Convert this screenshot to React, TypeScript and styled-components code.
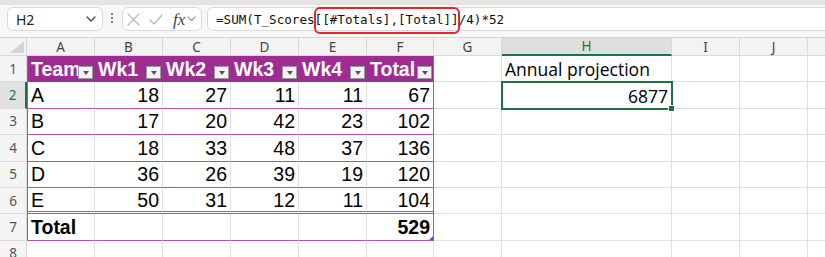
import React from 'react';
import styled, { createGlobalStyle, css } from 'styled-components';

const GlobalStyle = createGlobalStyle`
  html, body { margin: 0; padding: 0; background: #fff; overflow: hidden; }
  #root { width: 825px; height: 257px; }
`;

const PURPLE = '#a02b93';
const LINE = '#b84dae';
const GRID = '#e1e1e1';
const GREEN = '#1e7145';

const Page = styled.div`
  width: 825px;
  height: 257px;
  overflow: hidden;
  display: flex;
  flex-direction: column;
  background: #fff;
`;

const TopStrip = styled.div`
  flex: none;
  height: 5px;
  background: #e7e3e2;
`;

const Toolbar = styled.div`
  flex: none;
  height: 32px;
  box-sizing: border-box;
  padding: 2px 0 0 7px;
  background: #f7f7f7;
  display: flex;
  align-items: flex-start;
  overflow: hidden;
`;

const BoxBase = css`
  box-sizing: border-box;
  height: 24px;
  background: #fff;
  border: 1px solid #dadada;
  border-radius: 6px;
  display: flex;
  align-items: center;
`;

const NameBox = styled.div`
  ${BoxBase};
  width: 96px;
  padding: 0 6px 0 8px;
  justify-content: space-between;
  font-family: "Noto Sans", "Open Sans", sans-serif;
  font-size: 14px;
  color: #222;
`;

const Dots = styled.div`
  margin: 6px 0 0 8px;
  width: 2px;
  display: flex;
  flex-direction: column;
  gap: 2px;
  & > i {
    display: block;
    width: 2px;
    height: 2px;
    border-radius: 1px;
    background: #555;
  }
`;

const FuncBox = styled.div`
  ${BoxBase};
  width: 80px;
  margin-left: 9px;
  padding-left: 4px;
  gap: 9px;
`;

const Fx = styled.span`
  font-family: "Liberation Serif", "DejaVu Serif", serif;
  font-style: italic;
  font-size: 17px;
  color: #444;
  margin-left: 1px;
  margin-right: -7px;
  line-height: 1;
`;

const FormulaBox = styled.div`
  ${BoxBase};
  flex: 1;
  margin-left: 5px;
  margin-right: -12px;
  padding-left: 8px;
  font-family: "DejaVu Sans Mono", "Liberation Mono", monospace;
  font-size: 12.6px;
  color: #111;
  white-space: nowrap;
  overflow: visible;
`;

const Highlight = styled.span`
  position: relative;
  &::after {
    content: '';
    position: absolute;
    left: -1px;
    right: -1px;
    top: -5px;
    bottom: -7px;
    border: 2px solid #e3262b;
    border-radius: 6px;
    pointer-events: none;
  }
`;

const Sheet = styled.div`
  flex: none;
  display: grid;
  grid-template-columns: 27px 68px 68px 68px 68px 68px 67px 68px 170px 68px 68px 68px;
  grid-template-rows: 18px repeat(8, 26.4px);
  border-top: 1px solid #d6d6d6;
`;

const Corner = styled.div`
  box-sizing: border-box;
  background: #f3f3f3;
  border-right: 1px solid #d9d9d9;
  border-bottom: 1px solid #d9d9d9;
  display: flex;
  align-items: flex-end;
  justify-content: flex-end;
  padding: 0 2px 2px 0;
`;

const ColHead = styled.div<{ $selected?: boolean }>`
  box-sizing: border-box;
  display: flex;
  align-items: center;
  justify-content: center;
  font-family: "Noto Sans", "Open Sans", sans-serif;
  font-size: 13.5px;
  color: ${p => (p.$selected ? GREEN : '#444')};
  background: ${p => (p.$selected ? '#dedede' : '#f3f3f3')};
  border-right: 1px solid #d9d9d9;
  border-bottom: ${p => (p.$selected ? `2px solid ${GREEN}` : '1px solid #d9d9d9')};
`;

const RowHead = styled.div<{ $selected?: boolean }>`
  box-sizing: border-box;
  display: flex;
  align-items: center;
  justify-content: center;
  font-family: "Noto Sans", "Open Sans", sans-serif;
  font-size: 13.5px;
  color: ${p => (p.$selected ? GREEN : '#555')};
  background: ${p => (p.$selected ? '#e2e2e2' : '#f5f5f5')};
  border-bottom: 1px solid #dcdcdc;
  border-right: ${p => (p.$selected ? `2px solid ${GREEN}` : '1px solid #d9d9d9')};
`;

type Kind = 'plain' | 'head' | 'body' | 'total';

const Cell = styled.div<{
  $kind: Kind;
  $num?: boolean;
  $edgeL?: boolean;
  $edgeR?: boolean;
  $below?: 'grid' | 'table' | 'double' | 'head';
  $alt?: boolean;
  $selected?: boolean;
}>`
  box-sizing: border-box;
  position: relative;
  display: flex;
  align-items: center;
  justify-content: ${p => (p.$num ? 'flex-end' : 'flex-start')};
  padding: 1px 3px 0 3px;
  font-family: ${p => (p.$alt ? '"Open Sans", "Noto Sans", sans-serif' : '"Liberation Sans", Arial, sans-serif')};
  font-size: ${p => (p.$alt ? '17.5px' : '19.5px')};
  font-weight: ${p => (p.$kind === 'head' || p.$kind === 'total' ? 700 : 400)};
  color: ${p => (p.$kind === 'head' ? '#fff' : '#000')};
  background: ${p => (p.$kind === 'head' ? PURPLE : '#fff')};
  white-space: nowrap;
  border-right: 1px solid ${p => (p.$edgeR ? LINE : p.$kind === 'head' ? PURPLE : GRID)};
  ${p => p.$edgeL && `border-left: 1px solid ${LINE};`}
  border-bottom: ${p =>
    p.$below === 'head'
      ? `1px solid ${PURPLE}`
      : p.$below === 'table'
      ? `1px solid ${LINE}`
      : p.$below === 'double'
      ? `3px double ${LINE}`
      : `1px solid ${GRID}`};
  ${p =>
    p.$selected &&
    css`
      outline: 2px solid ${GREEN};
      outline-offset: -1px;
      z-index: 2;
    `}
`;

const FilterBtn = styled.span`
  position: absolute;
  right: 1px;
  bottom: 2px;
  box-sizing: border-box;
  width: 15px;
  height: 13px;
  background: #f4f4f4;
  border: 1px solid #9a9a9a;
  display: flex;
  align-items: center;
  justify-content: center;
  &::after {
    content: '';
    width: 0;
    height: 0;
    border-left: 3.5px solid transparent;
    border-right: 3.5px solid transparent;
    border-top: 4px solid #555;
    margin-top: 1px;
  }
`;

const FillHandle = styled.span`
  position: absolute;
  right: -4px;
  bottom: -4px;
  width: 5px;
  height: 5px;
  background: ${GREEN};
  border: 1px solid #fff;
  z-index: 3;
`;

const ResizeGrip = styled.span`
  position: absolute;
  right: 0;
  bottom: 0;
  width: 0;
  height: 0;
  border-left: 4px solid transparent;
  border-bottom: 4px solid #4f55c8;
`;

const cols = ['A', 'B', 'C', 'D', 'E', 'F', 'G', 'H', 'I', 'J', 'K'];

const table: (string | number)[][] = [
  ['Team', 'Wk1', 'Wk2', 'Wk3', 'Wk4', 'Total'],
  ['A', 18, 27, 11, 11, 67],
  ['B', 17, 20, 42, 23, 102],
  ['C', 18, 33, 48, 37, 136],
  ['D', 36, 26, 39, 19, 120],
  ['E', 50, 31, 12, 11, 104],
  ['Total', '', '', '', '', 529],
];

const Chevron = ({ w = 10, color = '#444' }: { w?: number; color?: string }) => (
  <svg width={w} height={w * 0.6} viewBox="0 0 10 6" fill="none">
    <polyline points="1,1 5,5 9,1" stroke={color} strokeWidth="1.3" strokeLinecap="round" strokeLinejoin="round" />
  </svg>
);

export default function App() {
  const rows: React.ReactNode[] = [];

  for (let r = 0; r < 8; r++) {
    const rowNum = r + 1;
    rows.push(
      <RowHead key={`rh${r}`} $selected={rowNum === 2}>
        {rowNum}
      </RowHead>
    );
    cols.forEach((c, ci) => {
      const key = `${c}${rowNum}`;
      if (ci < 6 && r < 7) {
        const v = table[r][ci];
        const kind: Kind = r === 0 ? 'head' : r === 6 ? 'total' : 'body';
        const below = r === 0 ? 'head' : r === 5 ? 'double' : 'table';
        rows.push(
          <Cell
            key={key}
            $kind={kind}
            $num={typeof v === 'number'}
            $edgeL={ci === 0}
            $edgeR={ci === 5}
            $below={below}
          >
            {v}
            {r === 0 && <FilterBtn />}
            {r === 6 && ci === 5 && <ResizeGrip />}
          </Cell>
        );
        return;
      }
      if (c === 'H' && r === 0) {
        rows.push(
          <Cell key={key} $kind="plain" $alt>
            Annual projection
          </Cell>
        );
        return;
      }
      if (c === 'H' && r === 1) {
        rows.push(
          <Cell key={key} $kind="plain" $alt $num $selected>
            6877
            <FillHandle />
          </Cell>
        );
        return;
      }
      rows.push(<Cell key={key} $kind="plain" />);
    });
  }

  return (
    <Page>
      <GlobalStyle />
      <TopStrip />
      <Toolbar>
        <NameBox>
          <span>H2</span>
          <Chevron w={10} color="#444" />
        </NameBox>
        <Dots>
          <i />
          <i />
          <i />
        </Dots>
        <FuncBox>
          <svg width="13" height="13" viewBox="0 0 13 13" fill="none">
            <path d="M1 1 L12 12 M12 1 L1 12" stroke="#b8b8b8" strokeWidth="1.2" strokeLinecap="round" />
          </svg>
          <svg width="14" height="11" viewBox="0 0 14 11" fill="none">
            <polyline points="1,6 5,10 13,1" stroke="#b8b8b8" strokeWidth="1.2" strokeLinecap="round" strokeLinejoin="round" />
          </svg>
          <Fx>fx</Fx>
          <Chevron w={9} color="#999" />
        </FuncBox>
        <FormulaBox>
          =SUM(T_Scores<Highlight>[[#Totals],[Total]]</Highlight>/4)*52
        </FormulaBox>
      </Toolbar>
      <Sheet>
        <Corner>
          <svg width="14" height="12" viewBox="0 0 14 12">
            <polygon points="14,0 14,12 0,12" fill="#d4d4d4" />
          </svg>
        </Corner>
        {cols.map(c => (
          <ColHead key={c} $selected={c === 'H'}>
            {c}
          </ColHead>
        ))}
        {rows}
      </Sheet>
    </Page>
  );
}
